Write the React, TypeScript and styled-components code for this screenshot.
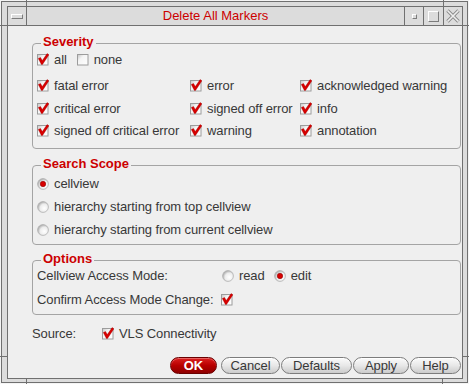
import React from "react";
import styled, { createGlobalStyle } from "styled-components";

const GlobalStyle = createGlobalStyle`
  html, body {
    margin: 0;
    padding: 0;
    background: #dcdcdc;
  }
  body {
    font-family: "Liberation Sans", Arial, sans-serif;
  }
`;

const LINE = "#707070";

const Frame = styled.div`
  position: relative;
  box-sizing: border-box;
  width: 469px;
  height: 384px;
  display: flex;
  flex-direction: column;
  padding: 5px 5px 4px 6px;
  background: #dcdcdc;
  border: 1px solid #f4f4f4;
  box-shadow: inset 0 0 0 1px ${LINE};
`;

// resize handle ticks drawn on the window frame
const Tick = styled.span<{ $x: number; $y: number; $w: number; $h: number }>`
  position: absolute;
  left: ${(p) => p.$x}px;
  top: ${(p) => p.$y}px;
  width: ${(p) => p.$w}px;
  height: ${(p) => p.$h}px;
  background: ${LINE};
`;

const TitleBar = styled.div`
  display: flex;
  height: 20px;
  box-sizing: border-box;
  border: 1px solid ${LINE};
  background: #dcdcdc;
`;

const TitleButton = styled.div<{ $w: number; $side: "left" | "right" }>`
  width: ${(p) => p.$w}px;
  box-sizing: border-box;
  display: flex;
  align-items: center;
  justify-content: center;
  ${(p) =>
    p.$side === "left"
      ? `border-right: 1px solid ${LINE};`
      : `border-left: 1px solid ${LINE};`}
`;

const Bevel = styled.span<{ $w: number; $h: number }>`
  display: block;
  box-sizing: border-box;
  width: ${(p) => p.$w}px;
  height: ${(p) => p.$h}px;
  border-top: 1px solid #ffffff;
  border-left: 1px solid #ffffff;
  border-right: 1px solid #7c7c7c;
  border-bottom: 1px solid #7c7c7c;
`;

const Title = styled.div`
  flex: 1;
  text-align: center;
  color: #cc0000;
  font-size: 13px;
  line-height: 18px;
`;

const Client = styled.div`
  flex: 1;
  display: flex;
  flex-direction: column;
  border: 1px solid ${LINE};
  border-top: none;
  background: #efefef;
  padding: 0 1px 4px 24px;
  color: #383838;
  font-size: 13px;
  letter-spacing: -0.1px;
`;

const Group = styled.section<{ $mt: number; $pad: string }>`
  position: relative;
  margin-top: ${(p) => p.$mt}px;
  border: 1px solid #a4a4a4;
  border-radius: 4px;
  padding: ${(p) => p.$pad};
`;

const Legend = styled.span`
  position: absolute;
  top: -10px;
  left: 8px;
  padding: 0 2px;
  background: #efefef;
  color: #cc0000;
  font-weight: bold;
  font-size: 13px;
  line-height: 15px;
  letter-spacing: 0;
`;

const InlineRow = styled.div`
  display: flex;
  align-items: center;
  gap: 10px;
  height: 22px;
`;

const SeverityGrid = styled.div`
  display: grid;
  margin-top: 4.5px;
  grid-template-columns: 153px 110px 1fr;
  grid-auto-rows: 22.5px;
`;

const Item = styled.label`
  display: flex;
  align-items: center;
  gap: 5px;
  white-space: nowrap;
  line-height: 15px;
`;

const Rows = styled.div<{ $h: number }>`
  display: grid;
  grid-auto-rows: ${(p) => p.$h}px;
`;

const FieldRow = styled.div<{ $label: number }>`
  display: grid;
  grid-template-columns: ${(p) => p.$label}px 1fr;
  align-items: center;
  white-space: nowrap;
`;

const Choices = styled.div`
  display: flex;
  align-items: center;
  gap: 9px;
`;

const SourceRow = styled(FieldRow)`
  margin-top: 7px;
  height: 22px;
`;

const ButtonRow = styled.div`
  margin-top: auto;
  display: flex;
  justify-content: flex-end;
  gap: 1px;
`;

const Button = styled.button<{ $w: number; $primary?: boolean }>`
  width: ${(p) => p.$w}px;
  height: 17px;
  box-sizing: border-box;
  padding: 0;
  margin-right: ${(p) => (p.$primary ? 3 : 0)}px;
  border-radius: 9px;
  font-family: inherit;
  font-size: 13px;
  line-height: 15px;
  letter-spacing: -0.1px;
  font-weight: ${(p) => (p.$primary ? "bold" : "normal")};
  color: ${(p) => (p.$primary ? "#ffffff" : "#383838")};
  border: 1px solid ${(p) => (p.$primary ? "#6a0000" : "#7c7c7c")};
  background: ${(p) =>
    p.$primary
      ? "linear-gradient(#dc2020, #b80000 50%, #8e0000)"
      : "linear-gradient(#fbfbfb, #e8e8e8 50%, #cbcbcb)"};
  box-shadow: inset 0 1px 0 ${(p) => (p.$primary ? "#e86060" : "#ffffff")};
`;

const CheckBox = ({ on }: { on: boolean }) => (
  <svg width="12" height="13" viewBox="0 0 12 13">
    <defs>
      <linearGradient id="cbFill" x1="0" y1="0" x2="1" y2="1">
        <stop offset="0" stopColor="#c4c4c4" />
        <stop offset="0.35" stopColor="#f4f4f4" />
        <stop offset="1" stopColor="#ffffff" />
      </linearGradient>
    </defs>
    <rect x="0.5" y="1.5" width="10.5" height="10.5" fill="url(#cbFill)" stroke="#9c9c9c" />
    {on && (
      <path
        d="M1.3 5.4 L3.5 4.5 L5.3 7.6 L10.1 0.6 L11.9 1.8 L5.5 11.4 L4.4 11.4 Z"
        fill="#d80000"
        stroke="#a00000"
        strokeWidth="0.4"
      />
    )}
  </svg>
);

const Radio = ({ on }: { on: boolean }) => (
  <svg width="12" height="12" viewBox="0 0 12 12">
    <defs>
      <radialGradient id="rbFill" cx="0.62" cy="0.62" r="0.7">
        <stop offset="0" stopColor="#ffffff" />
        <stop offset="0.55" stopColor="#ededed" />
        <stop offset="1" stopColor="#9a9a9a" />
      </radialGradient>
    </defs>
    <circle cx="6" cy="6" r="5.4" fill="url(#rbFill)" stroke="#b0b0b0" strokeWidth="0.8" />
    {on && <circle cx="6" cy="6" r="2.7" fill="#d80000" stroke="#900000" strokeWidth="0.6" />}
  </svg>
);

const CloseIcon = () => (
  <svg width="14" height="14" viewBox="0 0 14 14">
    <path d="M1.5 1.5 L12.5 12.5 M12.5 1.5 L1.5 12.5" stroke="#8a8a8a" strokeWidth="3.4" />
    <path d="M1.5 1.5 L12.5 12.5 M12.5 1.5 L1.5 12.5" stroke="#eeeeee" strokeWidth="1.6" />
  </svg>
);

const severity: [string, boolean][] = [
  ["fatal error", true],
  ["error", true],
  ["acknowledged warning", true],
  ["critical error", true],
  ["signed off error", true],
  ["info", true],
  ["signed off critical error", true],
  ["warning", true],
  ["annotation", true],
];

const scopes = [
  "cellview",
  "hierarchy starting from top cellview",
  "hierarchy starting from current cellview",
];

const buttons: [string, number][] = [
  ["Cancel", 59],
  ["Defaults", 71],
  ["Apply", 56],
  ["Help", 51],
];

export default function App() {
  return (
    <>
      <GlobalStyle />
      <Frame>
        <Tick $x={25} $y={-1} $w={1} $h={6} />
        <Tick $x={442} $y={-1} $w={1} $h={6} />
        <Tick $x={-1} $y={24} $w={7} $h={1} />
        <Tick $x={461} $y={24} $w={7} $h={1} />
        <Tick $x={25} $y={377} $w={1} $h={6} />
        <Tick $x={441} $y={377} $w={1} $h={6} />
        <Tick $x={-1} $y={355} $w={7} $h={1} />
        <Tick $x={461} $y={355} $w={7} $h={1} />

        <TitleBar>
          <TitleButton $w={19} $side="left">
            <Bevel $w={12} $h={5} />
          </TitleButton>
          <Title>Delete All Markers</Title>
          <TitleButton $w={19} $side="right">
            <Bevel $w={5} $h={5} />
          </TitleButton>
          <TitleButton $w={20} $side="right">
            <Bevel $w={11} $h={11} />
          </TitleButton>
          <TitleButton $w={19} $side="right">
            <CloseIcon />
          </TitleButton>
        </TitleBar>

        <Client>
          <Group $mt={17} $pad="4px 4px 6px">
            <Legend>Severity</Legend>
            <InlineRow>
              <Item>
                <CheckBox on />
                all
              </Item>
              <Item>
                <CheckBox on={false} />
                none
              </Item>
            </InlineRow>
            <SeverityGrid>
              {severity.map(([label, on]) => (
                <Item key={label}>
                  <CheckBox on={on} />
                  {label}
                </Item>
              ))}
            </SeverityGrid>
          </Group>

          <Group $mt={16} $pad="6px 4px 3px">
            <Legend>Search Scope</Legend>
            <Rows $h={23}>
              {scopes.map((s, i) => (
                <Item key={s}>
                  <Radio on={i === 0} />
                  {s}
                </Item>
              ))}
            </Rows>
          </Group>

          <Group $mt={15} $pad="3px 4px 3px">
            <Legend>Options</Legend>
            <Rows $h={23.5}>
              <FieldRow $label={185}>
                Cellview Access Mode:
                <Choices>
                  <Item>
                    <Radio on={false} />
                    read
                  </Item>
                  <Item>
                    <Radio on />
                    edit
                  </Item>
                </Choices>
              </FieldRow>
              <FieldRow $label={184}>
                Confirm Access Mode Change:
                <Item>
                  <CheckBox on />
                </Item>
              </FieldRow>
            </Rows>
          </Group>

          <SourceRow $label={70}>
            Source:
            <Item>
              <CheckBox on />
              VLS Connectivity
            </Item>
          </SourceRow>

          <ButtonRow>
            <Button $w={47} $primary>
              OK
            </Button>
            {buttons.map(([label, w]) => (
              <Button key={label} $w={w}>
                {label}
              </Button>
            ))}
          </ButtonRow>
        </Client>
      </Frame>
    </>
  );
}
